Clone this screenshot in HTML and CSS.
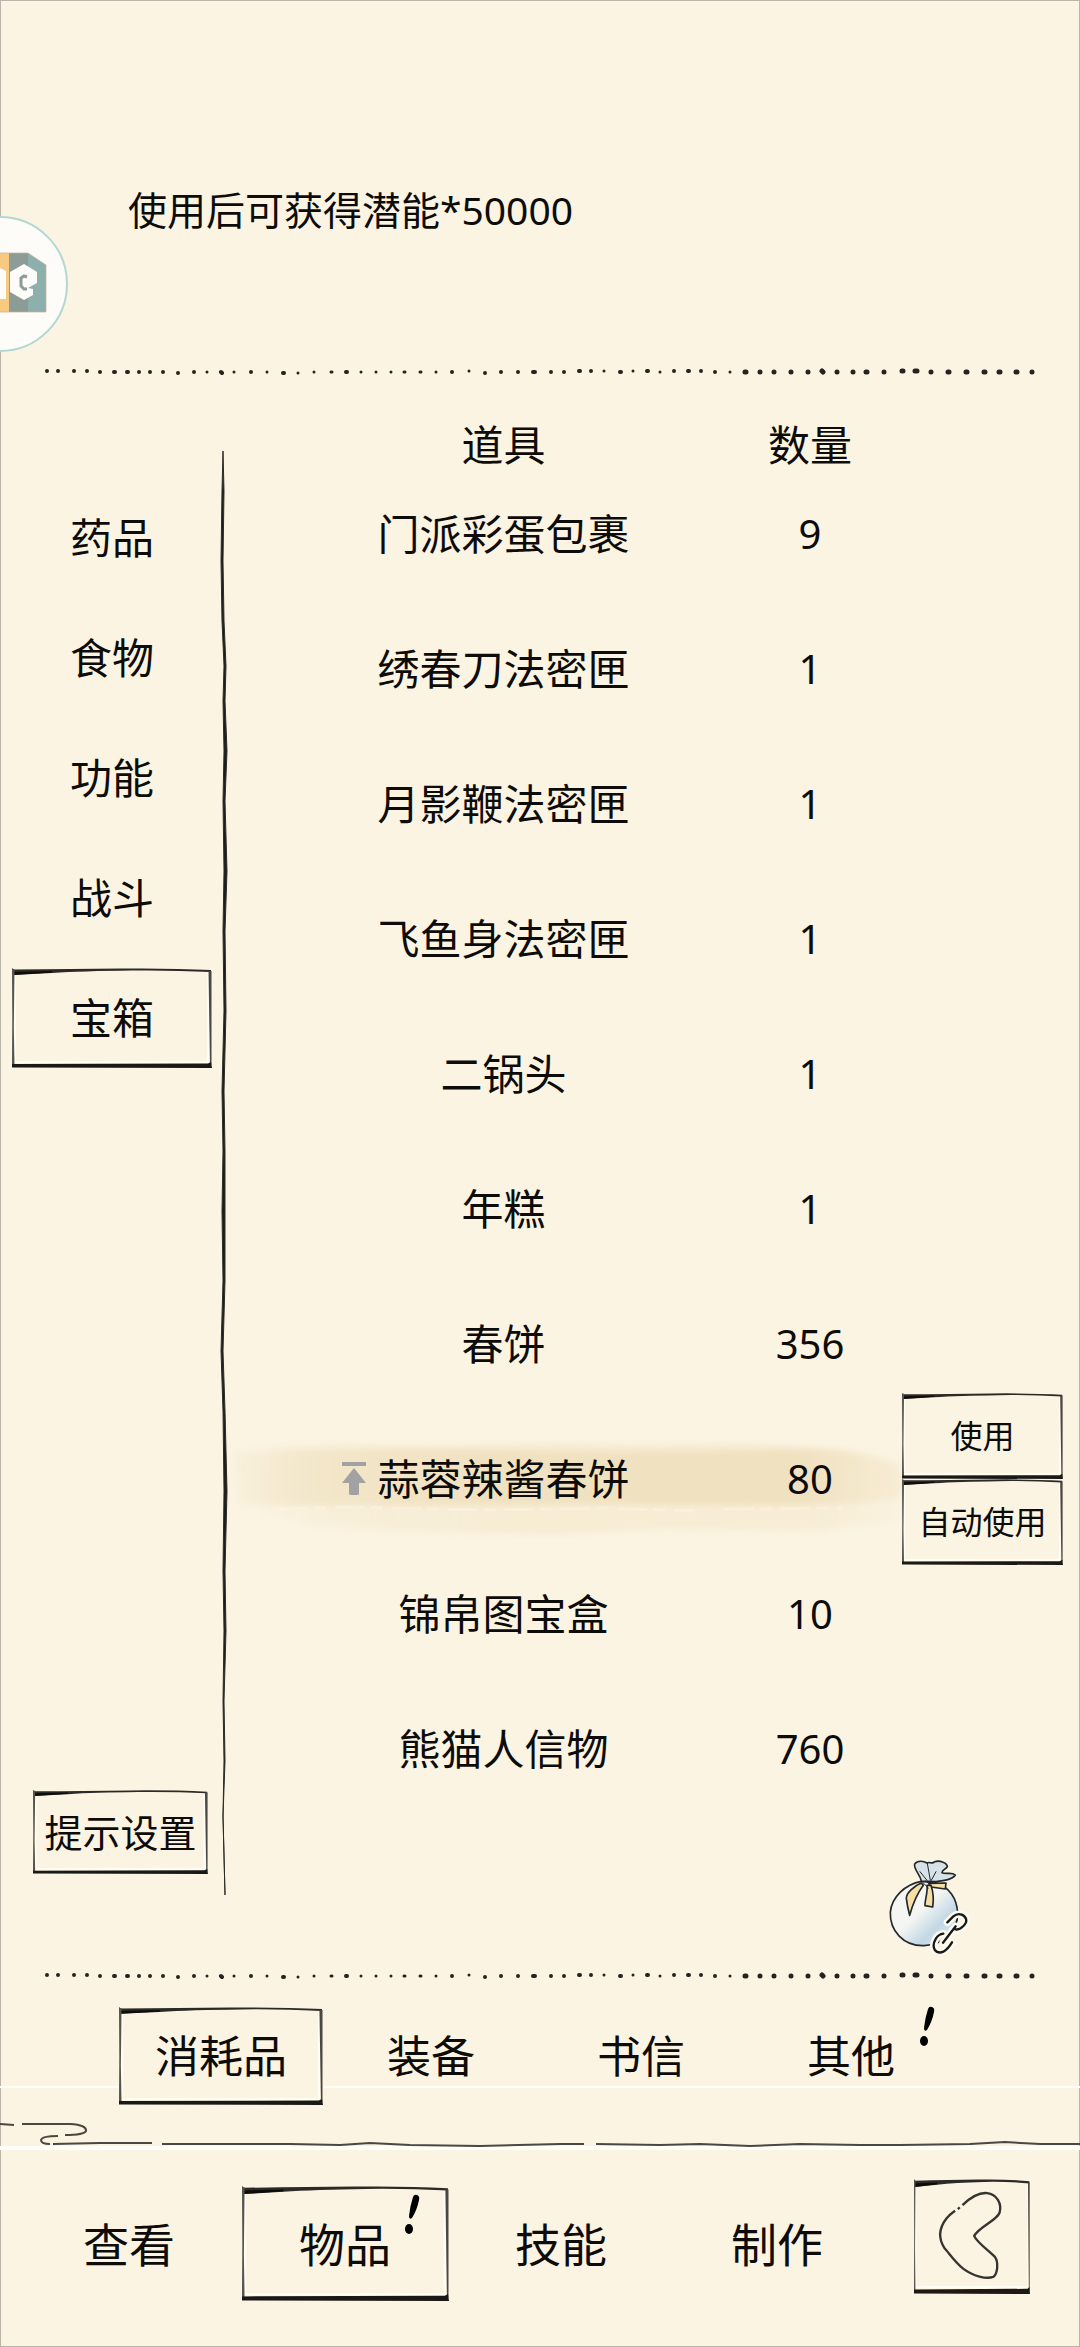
FILE: index.html
```html
<!DOCTYPE html>
<html lang="zh-CN">
<head>
  <meta charset="UTF-8" />
  <meta name="viewport" content="width=device-width, initial-scale=1.0"/>
  <title>物品</title>
  <link rel="stylesheet" href="styles.css">
</head>
<body>
  <!-- shared drawings -->
  <svg class="defs" aria-hidden="true">
    <symbol id="frame" viewBox="0 0 200 100" preserveAspectRatio="none">
      <path d="M3 6V94H196V5" fill="none" stroke="#fffdf4" stroke-width="2"/>
      <path d="M0 0L2 1.500Q60 1 110 .5Q160 0 199 2V4Q160 2 120 2.500Q70 3 40 5L1 7Z" fill="#2b2a26"/>
      <path d="M1 4L40 3V4.500L1 7Z" fill="#0c0c0a"/>
      <path d="M0 1H2.500L1.800 60L2.500 97H0L.3 50Z" fill="#55534c"/>
      <path d="M196.500 3H199.500L199.500 97H198Z" fill="#4a4842"/>
      <path d="M0 96L196 95.500L199 94L200 100L0 99.500Z" fill="#1a1916"/>
    </symbol>
    <symbol id="dots" viewBox="0 0 1080 20">
      <g fill="none" stroke="#24231e" stroke-linecap="round">
        <path stroke-width="3" d="M207 10h0M234 10h0M267 10h0M298 11h0M391 10h0M469 9h0M660 10h0M314 10h0M361 10h0M376 10h0M436 10h0M730 10h0M604 9h0M633 9h0M404 10h1M331 10h1M420 10h1"/>
        <path stroke-width="4" d="M47 9h0M58 9h0M74 9h0M87 9h0M100 10h0M139 10h0M150 10h0M163 10h0M178 11h0M194 10h0M251 10h0M283 11h1M452 10h0M501 10h0M518 10h0M551 10h0M564 10h0M579 9h1M591 9h0M620 10h1M647 9h1M674 9h0M701 9h0M114 10h1M127 10h1M221 10l1 1M346 10h1M485 11h0M533 10h2M688 9h1M715 10h0"/>
        <path stroke-width="5" d="M745 10h1M760 10h0M774 10h0M791 10h0M808 10h0M822 9l1 1M837 10h0M853 10h0M866 10h1M884 10h0M902 9h1M915 9h2M931 10h0M948 10h1M966 10h1M984 10h1M999 10h1M1016 10h1M1032 10h0"/>
      </g>
    </symbol>
    <symbol id="mark" viewBox="0 0 18 44">
      <path d="M10 4Q11 1 14 2Q17 3 16 7Q14 17 9 25Q6 27 6 23Q7 13 10 4Z"/>
      <ellipse cx="6" cy="36" rx="4" ry="5"/>
    </symbol>
  </svg>

  <div class="page">
    <a class="floater" href="#" aria-label="悬浮球">
      <svg viewBox="0 0 70 136">
        <circle cx="0" cy="68" r="67" fill="#fdfcf8" stroke="#b3d8d2" stroke-width="2"/>
        <path d="M0 37H9V96H0Z" fill="#f8ca80"/>
        <path d="M9 37H28V96H9Z" fill="#8d9c97"/>
        <path d="M28 37L46 49V96H28Z" fill="#8eb0ad"/>
        <path d="M0 37H28L46 49V96H0" fill="none" stroke="#c9ae9a" stroke-opacity=".7"/>
        <path d="M0 52L6 55V83H0Z" fill="#fdfcf8"/>
        <path d="M24 48L37 56V67L28 72L33 73V79L24 84L10 76V56Z" fill="#fdfcf8"/>
        <path d="M27 61L24 60L21 62V70L24 73H27" fill="none" stroke="#8d9c97" stroke-width="3"/>
      </svg>
    </a>

    <header class="description">
      <p>使用后可获得潜能*50000</p>
    </header>
    <svg class="dots" viewBox="0 0 1080 20" aria-hidden="true"><use href="#dots"/></svg>

    <main class="content">
      <div class="sidebar">
        <nav class="categories">
          <button type="button">药品</button>
          <button type="button">食物</button>
          <button type="button">功能</button>
          <button type="button">战斗</button>
          <button type="button" class="active"><svg class="frame" aria-hidden="true"><use href="#frame"/></svg>宝箱</button>
        </nav>
        <button type="button" class="settings"><svg class="frame" aria-hidden="true"><use href="#frame"/></svg>提示设置</button>
      </div>

      <div class="rule">
        <svg viewBox="0 0 12 1444" preserveAspectRatio="none" aria-hidden="true">
          <path d="M6 0L5 40L4 110L5 170L7 215L6 250L7 300L6 350L7 420L6 480L7 560L5 640L6 700L5 760L6 830L4 900L6 960L7 1040L6 1120L7 1180L6 1250L7 1310L6 1365L8 1444L6 1365L8 1310L7 1250L9 1180L8 1120L10 1040L8 960L6 900L8 830L8 760L8 700L7 640L9 560L8 480L10 420L8 350L10 300L8 250L9 215L7 170L6 110L7 40Z" fill="#1d1c18" stroke="#2d2c27"/>
        </svg>
      </div>

      <div class="items">
        <table>
          <thead>
            <tr><th class="name">道具</th><th class="count">数量</th><td class="actions"></td></tr>
          </thead>
          <tbody>
            <tr><td class="name">门派彩蛋包裹</td><td class="count">9</td><td></td></tr>
            <tr><td class="name">绣春刀法密匣</td><td class="count">1</td><td></td></tr>
            <tr><td class="name">月影鞭法密匣</td><td class="count">1</td><td></td></tr>
            <tr><td class="name">飞鱼身法密匣</td><td class="count">1</td><td></td></tr>
            <tr><td class="name">二锅头</td><td class="count">1</td><td></td></tr>
            <tr><td class="name">年糕</td><td class="count">1</td><td></td></tr>
            <tr><td class="name">春饼</td><td class="count">356</td><td></td></tr>
            <tr>
              <td class="name">
                <svg class="brush" viewBox="0 0 680 100" preserveAspectRatio="none" aria-hidden="true">
                  <defs>
                    <linearGradient id="wash">
                      <stop offset="0" stop-color="#f1e3c3" stop-opacity=".2"/>
                      <stop offset=".12" stop-color="#f1e3c3" stop-opacity=".7"/>
                      <stop offset=".4" stop-color="#f0e1c0"/>
                      <stop offset=".85" stop-color="#f0e1c0"/>
                      <stop offset="1" stop-color="#f3e6c8" stop-opacity=".4"/>
                    </linearGradient>
                    <filter id="soft" x="-5%" y="-20%" width="110%" height="140%"><feGaussianBlur stdDeviation="3"/></filter>
                  </defs>
                  <path filter="url(#soft)" fill="url(#wash)" fill-opacity=".4" d="M40 6L120 4L230 7L330 3L420 6L520 4L640 12L676 24V82L600 92L440 90L330 96L180 93L90 88L30 74Z"/>
                  <path filter="url(#soft)" fill="url(#wash)" d="M4 12Q180 8 300 11T560 10L620 12L680 26V58Q640 66 540 66L330 65L170 67L10 66Z"/>
                  <path d="M50 70L120 68L260 71L380 69L470 72M500 70L620 69" fill="none" stroke="#fbf4e2" stroke-width="3" stroke-opacity=".6" stroke-dasharray="30 6 12 9"/>
                </svg>
                <span class="pinned">
                  <svg viewBox="0 0 26 34" aria-hidden="true"><path d="M1 0H25V4H1ZM13 6L25 21H18V32Q18 33 16 33H10Q8 33 8 32V21H1Z"/></svg>
                  蒜蓉辣酱春饼
                </span>
              </td>
              <td class="count">80</td>
              <td class="actions">
                <div class="menu">
                  <button type="button"><svg class="frame" aria-hidden="true"><use href="#frame"/></svg>使用</button>
                  <button type="button"><svg class="frame" aria-hidden="true"><use href="#frame"/></svg>自动使用</button>
                </div>
              </td>
            </tr>
            <tr><td class="name">锦帛图宝盒</td><td class="count">10</td><td></td></tr>
            <tr><td class="name">熊猫人信物</td><td class="count">760</td><td></td></tr>
          </tbody>
        </table>

        <button type="button" class="bag" aria-label="锦囊">
          <svg viewBox="75 45 270 300" aria-hidden="true">
            <defs>
              <linearGradient id="cloth" x1="0" y1="0" x2="1" y2="1">
                <stop offset=".45" stop-color="#f5f6f4"/>
                <stop offset=".7" stop-color="#c3d7e4"/>
                <stop offset="1" stop-color="#e8eeee"/>
              </linearGradient>
            </defs>
            <g stroke="#24282b" stroke-width="5" stroke-linejoin="round" stroke-linecap="round">
              <path fill="url(#cloth)" d="M184 127C135 136 94 175 91 220C89 275 130 322 192 320C250 318 294 275 293 222C291 180 268 143 226 131Z"/>
              <path fill="#d6e1e8" d="M184 126C180 105 160 90 164 75C172 64 190 65 201 72C210 66 215 78 224 68C240 62 262 73 262 83C258 92 246 90 246 101C258 107 275 98 286 108C277 122 254 124 226 128Z"/>
              <path fill="#f4dfa6" d="M184 132C162 140 138 164 139 178C141 196 145 214 149 229C155 207 170 166 190 139Z"/>
              <path fill="#f4dfa6" d="M206 133L258 132L256 150L213 144Z"/>
              <path fill="#f4dfa6" d="M201 139C204 160 194 184 195 200L218 204C222 180 219 157 213 139Z"/>
              <path fill="none" stroke-width="3" d="M202 73L211 124M180 98L201 124M228 98L214 124M188 130L205 147M197 126L207 133"/>
            </g>
            <g fill="none" stroke-linecap="round" stroke-linejoin="round">
              <path stroke="#fdfaf0" stroke-width="22" d="M262 250L280 232Q292 222 305 227Q322 235 318 250Q314 260 302 268Q292 274 284 270M250 284Q236 286 228 298Q216 318 224 332Q234 345 250 338Q264 330 276 310M249 311L287 262"/>
              <path stroke="#171a1b" stroke-width="7" d="M262 250L280 232Q292 222 305 227Q322 235 318 250Q314 260 302 268Q292 274 284 270M250 284Q236 286 228 298Q216 318 224 332Q234 345 250 338Q264 330 276 310M249 311L287 262"/>
            </g>
          </svg>
        </button>
      </div>
    </main>

    <svg class="dots" viewBox="0 0 1080 20" aria-hidden="true"><use href="#dots"/></svg>

    <nav class="tabs">
      <button type="button" class="active"><svg class="frame" aria-hidden="true"><use href="#frame"/></svg>消耗品</button>
      <button type="button">装备</button>
      <button type="button">书信</button>
      <button type="button">其他<svg class="mark" aria-hidden="true"><use href="#mark"/></svg></button>
    </nav>

    <svg class="clouds" viewBox="0 0 1080 64" preserveAspectRatio="none" aria-hidden="true">
      <path d="M0 1H1080" stroke="#fffef8" stroke-width="2"/>
      <path d="M0 62H1080" stroke="#fffef8" stroke-width="4"/>
      <path d="M0 38L14 39M22 38H70Q87 39 86 45Q84 49 65 49M58 50Q42 50 41 54Q41 58 50 58M53 58L100 57L152 57M162 58L290 58L340 59L370 57L410 59L480 60L560 58L584 58M596 58L660 59L700 58L750 60L800 58L860 59L900 59L970 58L1005 56L1040 58L1080 58" fill="none" stroke="#4a4841" stroke-width="2"/>
    </svg>

    <nav class="bottom-nav">
      <button type="button">查看</button>
      <button type="button" class="active"><svg class="frame" aria-hidden="true"><use href="#frame"/></svg>物品<svg class="mark" aria-hidden="true"><use href="#mark"/></svg></button>
      <button type="button">技能</button>
      <button type="button">制作</button>
      <button type="button" class="back" aria-label="返回">
        <svg class="frame" aria-hidden="true"><use href="#frame"/></svg>
        <svg class="arrow" viewBox="103 567 347 345" aria-hidden="true">
          <path d="M248 645C275 619 302 607 322 609C350 612 367 640 359 668C350 692 300 708 283 737C290 755 325 780 345 800C356 815 354 850 340 860C320 867 280 858 250 835C225 815 205 785 195 775C175 745 177 715 200 685C210 672 218 668 226 662M234 657L240 652"/>
        </svg>
      </button>
    </nav>
  </div>
</body>
</html>
```
FILE: styles.css
```css
* {
  box-sizing: border-box;
}

body {
  font-family: "Noto Sans", "Noto Sans CJK SC", sans-serif;
  font-size: 42px;
  line-height: 42px;
  background-color: #fbf4e2;
  margin: 0;
  color: #0d0c0a;
}

button {
  position: relative;
  background: none;
  border: none;
  padding: 0;
  font: inherit;
  color: inherit;
  cursor: pointer;
}

svg {
  display: block;
}

.defs {
  position: absolute;
  width: 0;
  height: 0;
}

.page {
  position: relative;
  z-index: 0;
  display: flex;
  flex-direction: column;
  min-height: 100vh;
  overflow: hidden;
  box-shadow: inset 0 0 0 1px #b9b5a8;
}

.frame {
  position: absolute;
  z-index: -1;
  inset: 0;
  width: 100%;
  height: 100%;
}

.mark {
  position: absolute;
  width: 18px;
  height: 44px;
}

.floater {
  position: absolute;
  top: 216px;
  left: 0;
  width: 70px;
}

.description {
  padding: 180px 128px 122px;
}

.description p {
  margin: 0;
  font-size: 39px;
  line-height: 60px;
}

.dots {
  width: 100%;
}

.content {
  flex: 1;
  display: grid;
  grid-template-columns: 217px 12px 1fr;
}

/* left column */
.sidebar {
  display: flex;
  flex-direction: column;
  justify-content: space-between;
  padding: 106px 5px 92px 12px;
}

.categories {
  display: flex;
  flex-direction: column;
  gap: 20px;
}

.categories button {
  height: 100px;
}

.settings {
  width: 175px;
  height: 84px;
  margin-left: 21px;
  font-size: 38px;
}

.rule {
  position: relative;
  margin: 69px 0 71px;
}

.rule svg {
  position: absolute;
  width: 100%;
  height: 100%;
}

/* item list */
.items {
  display: flex;
  flex-direction: column;
  padding-top: 42px;
}

table {
  width: 100%;
  table-layout: fixed;
  border-collapse: collapse;
}

th,
td {
  height: 135px;
  padding: 0;
  font-weight: normal;
  text-align: center;
}

thead th,
thead td {
  height: 42px;
}

.name {
  position: relative;
  padding-left: 100px;
}

.count {
  width: 224px;
  padding-left: 40px;
}

tbody .count {
  font-size: 40px;
}

.actions {
  position: relative;
  width: 178px;
}

.brush {
  position: absolute;
  z-index: -1;
  top: 28px;
  left: 0;
  width: 150%;
  height: 100px;
}

.pinned {
  position: relative;
}

.pinned svg {
  position: absolute;
  top: 12px;
  right: 100%;
  width: 26px;
  height: 34px;
  margin-right: 10px;
  fill: #a3a2a2;
}

.menu {
  position: absolute;
  top: 50%;
  left: 0;
  width: 161px;
  transform: translateY(-50%);
}

.menu button {
  display: block;
  width: 100%;
  height: 86px;
  font-size: 32px;
}

.bag {
  align-self: flex-end;
  width: 90px;
  height: 100px;
  margin: 38px 105px 11px 0;
}

/* item type tabs */
.tabs {
  display: grid;
  grid-template-columns: repeat(4, 210px);
  justify-content: center;
  padding: 21px 8px 0 0;
}

.tabs button {
  width: 204px;
  height: 98px;
  justify-self: center;
  font-size: 44px;
}

.tabs .active {
  background-color: #fbf4e2;
}

.tabs .active .frame {
  z-index: 0;
}

.tabs .mark {
  top: -2px;
  right: 17px;
}

.clouds {
  position: relative;
  z-index: -1;
  width: 100%;
  height: 64px;
  margin-top: -19px;
}

/* main navigation */
.bottom-nav {
  display: grid;
  grid-template-columns: repeat(4, 216px) 1fr;
  align-items: start;
  padding: 29px 21px 46px;
}

.bottom-nav button {
  width: 207px;
  height: 115px;
  margin-top: 7px;
  justify-self: center;
  font-size: 46px;
}

.bottom-nav .mark {
  top: 7px;
  right: 28px;
}

.bottom-nav .back {
  width: 116px;
  margin-top: 0;
}

.arrow {
  position: relative;
  fill: none;
  stroke: #35342f;
  stroke-width: 7;
}
```
